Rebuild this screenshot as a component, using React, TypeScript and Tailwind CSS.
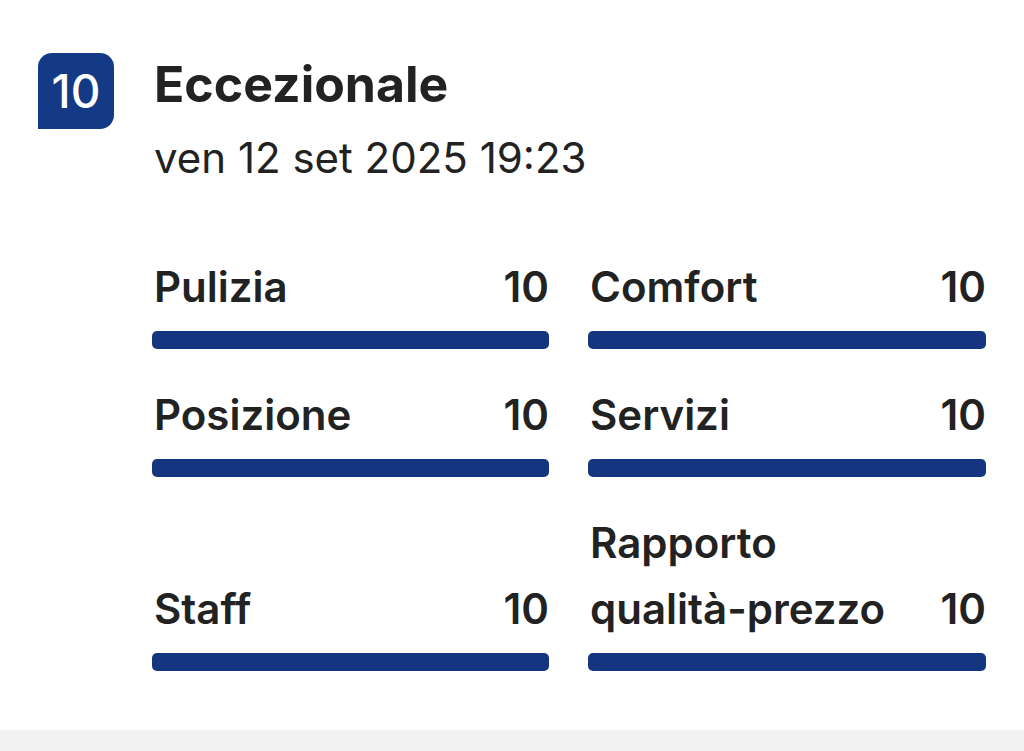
import React from "react";

const font = { fontFamily: "Inter, 'Noto Sans', sans-serif" };

function Item({ label, value, label2 }: { label: string; value: string; label2?: string }) {
  return (
    <div className="flex flex-col justify-end">
      <div className="flex items-end justify-between pl-[2px]">
        <div className="text-[42px] font-semibold leading-[66px] text-[#222222]">
          {label2 ? (
            <>
              <div>{label2}</div>
              <div>{label}</div>
            </>
          ) : (
            label
          )}
        </div>
        <div className="text-[42px] font-semibold leading-[66px] text-[#222222]">{value}</div>
      </div>
      <div className="mt-[11px] h-[18px] w-full rounded-[5px] bg-[#163580]" />
    </div>
  );
}

export default function App() {
  return (
    <div className="flex h-[751px] w-[1024px] flex-col bg-white" style={font}>
      <div className="flex flex-1 gap-[40px] pl-[38px] pr-[38px] pt-[53px]">
        <div className="flex h-[76px] w-[76px] shrink-0 items-center justify-center rounded-tl-[14px] rounded-tr-[14px] rounded-br-[14px] bg-[#143a85] text-[46px] font-medium text-white">
          10
        </div>
        <div className="flex flex-1 flex-col">
          <div className="text-[50px] font-bold leading-[62px] text-[#222222]">Eccezionale</div>
          <div className="mt-[19px] text-[42px] leading-[48px] text-[#222222]">ven 12 set 2025 19:23</div>
          <div className="-ml-[2px] mt-[72px] grid grid-cols-[397px_398px] gap-x-[39px] gap-y-[33px]">
            <Item label="Pulizia" value="10" />
            <Item label="Comfort" value="10" />
            <Item label="Posizione" value="10" />
            <Item label="Servizi" value="10" />
            <Item label="Staff" value="10" />
            <Item label="qualità-prezzo" label2="Rapporto" value="10" />
          </div>
        </div>
      </div>
      <div className="h-[21px] w-full bg-[#f2f2f2]" />
    </div>
  );
}
